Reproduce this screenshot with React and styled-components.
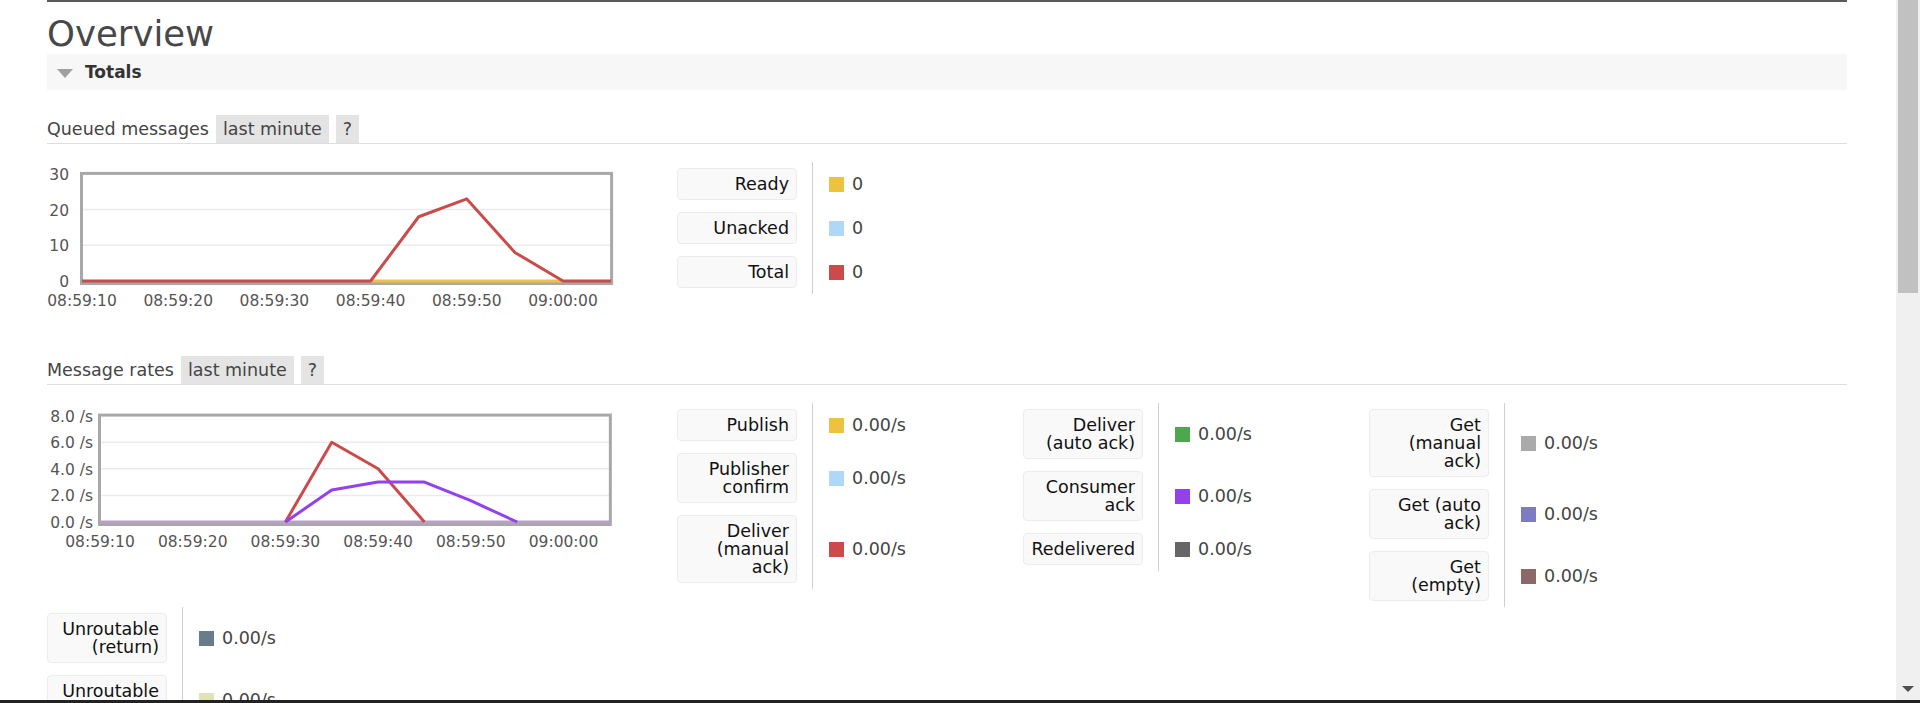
import React from "react"
import styled, { createGlobalStyle } from "styled-components"

const GlobalStyle = createGlobalStyle`
  html, body {
    margin: 0;
    padding: 0;
    background: #fff;
    font-family: "DejaVu Sans", Verdana, sans-serif;
    color: #444;
  }
`

const Frame = styled.div`
  display: flex;
  flex-direction: column;
  height: 703px;
  overflow: hidden;
`

const Viewport = styled.div`
  display: flex;
  flex: 1;
  min-height: 0;
`

const Page = styled.div`
  flex: 1;
  min-width: 0;
  overflow: hidden;
  padding: 0 49px 0 47px;
`

const Main = styled.main`
  border-top: 2px solid #5a5a5a;
`

const Title = styled.h1`
  margin: 11px 0 0;
  font-size: 35.5px;
  line-height: 41px;
  font-weight: normal;
  color: #484848;
`

const SectionBar = styled.div`
  display: flex;
  align-items: center;
  height: 36px;
  padding-left: 10px;
  background: #f7f7f7;
  font-size: 17px;
  font-weight: bold;
  color: #333;
  gap: 12px;
`

const Caret = styled.span`
  width: 0;
  height: 0;
  border-left: 8px solid transparent;
  border-right: 8px solid transparent;
  border-top: 9px solid #a0a0a0;
  margin-top: 2px;
`

const Heading = styled.div`
  display: flex;
  align-items: stretch;
  gap: 7px;
  height: 28px;
  margin-top: ${p => p.$top}px;
  border-bottom: 1px solid #dedede;
  font-size: 17.5px;
  line-height: 29px;
  color: #444;
`

const Tag = styled.span`
  background: #e4e4e4;
  padding: 0 7px;
`

const Flow = styled.div`
  display: flex;
  flex-wrap: wrap;
  align-items: flex-start;
  margin-top: 18px;
`

const Legend = styled.div`
  display: grid;
  grid-template-columns: 135px auto;
  width: 346px;
`

const LabelCell = styled.div`
  display: flex;
  padding: 6px 15px 6px 0;
`

const LabelBox = styled.div`
  flex: 1;
  background: #f9f9f9;
  border: 1px solid #ececec;
  border-radius: 4px;
  padding: 6px 7px;
  text-align: right;
  font-size: 17.5px;
  line-height: 18px;
  white-space: nowrap;
  color: #111;
`

const ValueCell = styled.div`
  display: flex;
  align-items: center;
  gap: 8px;
  padding-left: 16px;
  border-left: 1px solid #cfcfcf;
  font-size: 17.5px;
  color: #444;
`

const Swatch = styled.span`
  width: 15px;
  height: 15px;
  background: ${p => p.$color};
`

const Scrollbar = styled.div`
  display: flex;
  flex-direction: column;
  width: 24px;
  background: #f0f0f0;
`

const Thumb = styled.div`
  height: 293px;
  margin: 0 2px;
  background: #c1c1c1;
`

const DownArrow = styled.span`
  align-self: center;
  margin: auto 0 8px;
  width: 0;
  height: 0;
  border-left: 6px solid transparent;
  border-right: 6px solid transparent;
  border-top: 6px solid #505050;
`

const BottomBar = styled.div`
  height: 3px;
  background: #222;
`

const times = ["08:59:10", "08:59:20", "08:59:30", "08:59:40", "08:59:50", "09:00:00"]

const LineChart = ({ left, perSec, zeroY, perUnit, ticks, tickLabel, labelRight, series, baseline }) => {
  const x = t => left + t * perSec
  const y = v => zeroY - v * perUnit
  const top = y(ticks[ticks.length - 1])
  const pts = d => d.map(([t, v]) => `${x(t)},${y(v)}`).join(" ")
  return (
    <svg width="630" height="170" style={{ display: "block" }}>
      {ticks.slice(1, -1).map(v => (
        <line key={v} x1={x(0)} x2={x(55)} y1={y(v)} y2={y(v)} stroke="#ebebeb" strokeWidth="1.5" />
      ))}
      <rect x={x(0) - 0.5} y={top - 0.5} width={x(55) - x(0) + 1} height={y(0) - top + 3} fill="none" stroke="#a8a8a8" strokeWidth="3" />
      {baseline && (
        <line x1={x(0)} x2={x(55)} y1={y(0)} y2={y(0)} stroke={baseline} strokeWidth="3" />
      )}
      {series.map((s, i) => (
        <polyline key={i} points={pts(s.data)} fill="none" stroke={s.color} strokeWidth="3" strokeLinejoin="round" />
      ))}
      <g fontFamily="DejaVu Sans, Verdana, sans-serif" fontSize="15.5" fill="#555">
        {ticks.map(v => (
          <text key={v} x={labelRight} y={y(v) + 1.5} textAnchor="end" dominantBaseline="middle">
            {tickLabel(v)}
          </text>
        ))}
        {times.map((t, i) => (
          <text key={t} x={x(i * 10)} y="139" textAnchor="middle" dominantBaseline="middle">
            {t}
          </text>
        ))}
      </g>
    </svg>
  )
}

const LegendBlock = ({ rows }) => (
  <Legend>
    {rows.map(r => (
      <React.Fragment key={r.label.join(" ")}>
        <LabelCell>
          <LabelBox>
            {r.label.map((l, i) => (
              <div key={i}>{l}</div>
            ))}
          </LabelBox>
        </LabelCell>
        <ValueCell>
          <Swatch $color={r.color} />
          {r.value}
        </ValueCell>
      </React.Fragment>
    ))}
  </Legend>
)

const queuedRows = [
  { label: ["Ready"], color: "#edc240", value: "0" },
  { label: ["Unacked"], color: "#afd8f8", value: "0" },
  { label: ["Total"], color: "#cb4b4b", value: "0" },
]

const rate = "0.00/s"
const rateLegends = [
  [
    { label: ["Publish"], color: "#edc240", value: rate },
    { label: ["Publisher", "confirm"], color: "#afd8f8", value: rate },
    { label: ["Deliver", "(manual", "ack)"], color: "#cb4b4b", value: rate },
  ],
  [
    { label: ["Deliver", "(auto ack)"], color: "#4da74d", value: rate },
    { label: ["Consumer", "ack"], color: "#9440ed", value: rate },
    { label: ["Redelivered"], color: "#666666", value: rate },
  ],
  [
    { label: ["Get", "(manual", "ack)"], color: "#aaaaaa", value: rate },
    { label: ["Get (auto", "ack)"], color: "#7c7bc4", value: rate },
    { label: ["Get", "(empty)"], color: "#8c6868", value: rate },
  ],
  [
    { label: ["Unroutable", "(return)"], color: "#687d8b", value: rate },
    { label: ["Unroutable", "(drop)"], color: "#e2e3b4", value: rate },
  ],
]

const queuedSeries = [
  { color: "#edc240", data: [[30, 0], [50, 0]] },
  { color: "#cb4b4b", data: [[0, 0], [30, 0], [35, 18], [40, 23], [45, 8], [50, 0], [55, 0]] },
]

const rateSeries = [
  { color: "#cb4b4b", data: [[20, 0], [25, 6], [30, 4], [35, 0]] },
  { color: "#9440ed", data: [[20, 0], [25, 2.4], [30, 3], [35, 3], [40, 1.6], [45, 0]] },
]

const App = () => (
  <Frame>
    <GlobalStyle />
    <Viewport>
      <Page>
        <Main>
          <Title>Overview</Title>
          <SectionBar>
            <Caret />
            Totals
          </SectionBar>

          <Heading $top={25}>
            <span>Queued messages</span>
            <Tag>last minute</Tag>
            <Tag>?</Tag>
          </Heading>
          <Flow>
            <LineChart
              left={35}
              perSec={9.62}
              zeroY={119}
              perUnit={3.57}
              ticks={[0, 10, 20, 30]}
              tickLabel={v => String(v)}
              labelRight={22}
              series={queuedSeries}
            />
            <LegendBlock rows={queuedRows} />
          </Flow>

          <Heading $top={24}>
            <span>Message rates</span>
            <Tag>last minute</Tag>
            <Tag>?</Tag>
          </Heading>
          <Flow>
            <LineChart
              left={53}
              perSec={9.27}
              zeroY={119}
              perUnit={13.3}
              ticks={[0, 2, 4, 6, 8]}
              tickLabel={v => `${v.toFixed(1)} /s`}
              labelRight={46}
              baseline="#b8a0c6"
              series={rateSeries}
            />
            {rateLegends.map((rows, i) => (
              <LegendBlock key={i} rows={rows} />
            ))}
          </Flow>
        </Main>
      </Page>
      <Scrollbar>
        <Thumb />
        <DownArrow />
      </Scrollbar>
    </Viewport>
    <BottomBar />
  </Frame>
)

export default App
